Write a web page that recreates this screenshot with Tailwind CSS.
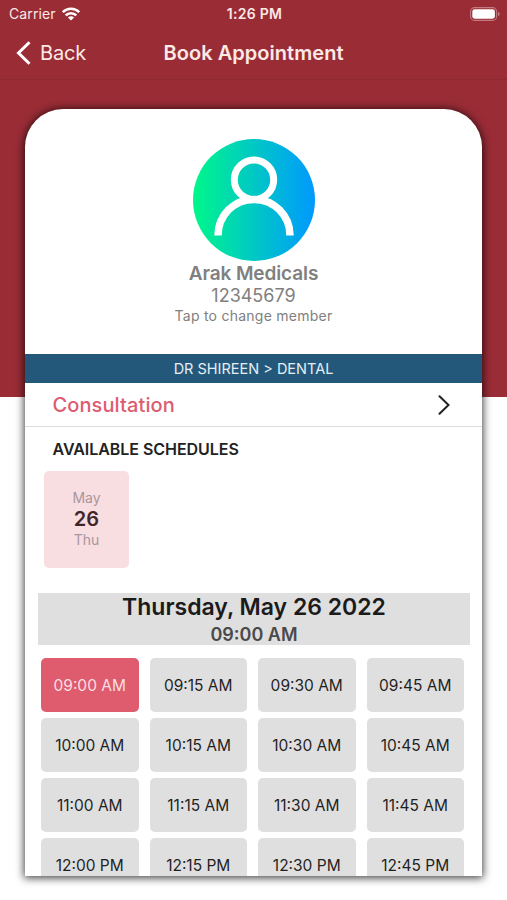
<!DOCTYPE html>
<html lang="en">
<head>
    <meta charset="UTF-8">
    <meta name="viewport" content="width=device-width, initial-scale=1.0">
    <title>Book Appointment</title>
    <script src="https://cdn.jsdelivr.net/npm/@tailwindcss/browser@4"></script>
</head>
<body class="h-[900px] overflow-hidden bg-[linear-gradient(#9a2c36_397px,#ffffff_397px)] font-['Inter',sans-serif]">
    <!-- Status Bar -->
    <div class="h-[27px] grid grid-cols-3 items-center pl-[9px] pr-[7px] text-[#fbe9e6] text-[14px]">
        <div class="flex items-center gap-[6px]">
            <span class="tracking-[0.1px]">Carrier</span>
            <svg class="w-[18px] h-[14px]" viewBox="0 0 18 14" fill="none" stroke="#ffffff" stroke-width="2.6">
                <path d="M0.8 5.2a11.6 11.6 0 0 1 16.4 0"/>
                <path d="M3.7 8.4a7.5 7.5 0 0 1 10.6 0"/>
                <path d="M9 13.6L5.9 10.6a4.4 4.4 0 0 1 6.2 0z" fill="#ffffff" stroke="none"/>
            </svg>
        </div>
        <div class="text-center font-semibold text-[14px] tracking-[0.3px]">1:26 PM</div>
        <svg class="justify-self-end w-[30px] h-[14px]" viewBox="0 0 30 14">
            <rect x="0.6" y="0.6" width="26" height="12.8" rx="4" fill="none" stroke="#c27b82" stroke-width="1.1"/>
            <rect x="2.3" y="2.3" width="22.6" height="9.4" rx="2.4" fill="#ffffff"/>
            <path d="M28 4.8v4.4c2.2-.8 2.2-3.6 0-4.4z" fill="#c27b82"/>
        </svg>
    </div>

    <!-- Navigation Bar -->
    <div class="h-[53px] grid grid-cols-[1fr_auto_1fr] items-center px-4 border-b border-[#8e2831] text-[#fbe9e6] text-xl">
        <div class="flex items-center gap-[9px]">
            <svg class="w-[15px] h-[24px]" viewBox="0 0 15 24" fill="none" stroke="#ffffff" stroke-width="3">
                <path d="M13.5 1.2L2.5 12l11 10.8"/>
            </svg>
            <span class="tracking-[-0.2px]">Back</span>
        </div>
        <h1 class="font-semibold tracking-[0.05px]">Book Appointment</h1>
    </div>

    <!-- Booking Card -->
    <div class="mt-[29px] mx-[25px] h-[767px] overflow-hidden rounded-t-[38px] bg-white shadow-[0_1px_9px_1px_rgba(0,0,0,0.75)]">
        <!-- Member -->
        <div class="h-[245px] pt-[30px] flex flex-col items-center text-[#808080]">
            <svg class="w-[122px] h-[122px]" viewBox="0 0 122 122" fill="none">
                <defs>
                    <linearGradient id="avatar" x1="0" y1="0" x2="1" y2="0">
                        <stop offset="0" stop-color="#00f78a"/>
                        <stop offset="1" stop-color="#0099ff"/>
                    </linearGradient>
                </defs>
                <circle cx="61" cy="61" r="61" fill="url(#avatar)"/>
                <circle cx="61" cy="40.7" r="19.7" stroke="#ffffff" stroke-width="7"/>
                <path d="M25 96.5c0-20 15.8-36.1 36-36.1S97 76.500 97 96.500" stroke="#ffffff" stroke-width="7.500"/>
            </svg>
            <div class="pt-px text-[19px] leading-[23px] font-semibold tracking-[-0.1px]">Arak Medicals</div>
            <div class="text-[18px] leading-[22px]">12345679</div>
            <div class="text-[14px] leading-[18px] tracking-[0.25px]">Tap to change member</div>
        </div>

        <div class="h-[29px] flex items-center justify-center bg-[#23587a] text-[#e6eef5] text-[14.5px]">DR SHIREEN &gt; DENTAL</div>

        <div class="h-[44px] flex items-center justify-between pl-[27.5px] pr-8 border-b border-[#dcdcdc]">
            <span class="text-[20px] font-medium tracking-[0.1px] text-[#dc5c70]">Consultation</span>
            <svg class="w-[12px] h-[20px]" viewBox="0 0 12 20" fill="none" stroke="#222222" stroke-width="2" stroke-linecap="round">
                <path d="M1.500 1.200L10.500 10l-9 8.800"/>
            </svg>
        </div>

        <!-- Dates -->
        <h2 class="h-[44px] flex items-center pl-[27.5px] text-[16px] font-semibold tracking-[-0.05px] text-[#222222]">AVAILABLE SCHEDULES</h2>
        <div class="ml-[19px] w-[85px] h-[97px] pb-[2px] flex flex-col items-center justify-center rounded-[5px] bg-[#f8dde1] text-[14px] leading-[20px] text-[#a8979b]">
            <span>May</span>
            <span class="text-[20px] leading-[22px] font-semibold text-[#40262b]">26</span>
            <span>Thu</span>
        </div>

        <div class="mt-[25px] ml-[13px] mr-[12px] h-[52px] bg-[#dfdfdf] text-center font-semibold">
            <div class="text-[23px] leading-[29px] text-[#1b1b1b]">Thursday, May 26 2022</div>
            <div class="text-[18px] leading-[25px] text-[#4a4a4a]">09:00 AM</div>
        </div>

        <!-- Time Slots -->
        <div id="slots" class="mt-[13px] ml-4 mr-[18px] grid grid-cols-4 gap-x-[11px] gap-y-[6px]"></div>
    </div>

    <script>
        const times = [
            '09:00 AM', '09:15 AM', '09:30 AM', '09:45 AM',
            '10:00 AM', '10:15 AM', '10:30 AM', '10:45 AM',
            '11:00 AM', '11:15 AM', '11:30 AM', '11:45 AM',
            '12:00 PM', '12:15 PM', '12:30 PM', '12:45 PM'
        ];
        const slots = document.getElementById('slots');

        times.forEach((time, i) => {
            const slot = document.createElement('button');
            slot.className = i === 0
                ? 'h-[54px] pt-[2px] rounded-[5px] text-[15.500px] bg-[#de5c6e] text-[#fbdfe2]'
                : 'h-[54px] pt-[2px] rounded-[5px] text-[15.500px] bg-[#dfdfdf] text-[#1f1f1f]';
            slot.textContent = time;
            slots.appendChild(slot);
        });
    </script>
</body>
</html>
